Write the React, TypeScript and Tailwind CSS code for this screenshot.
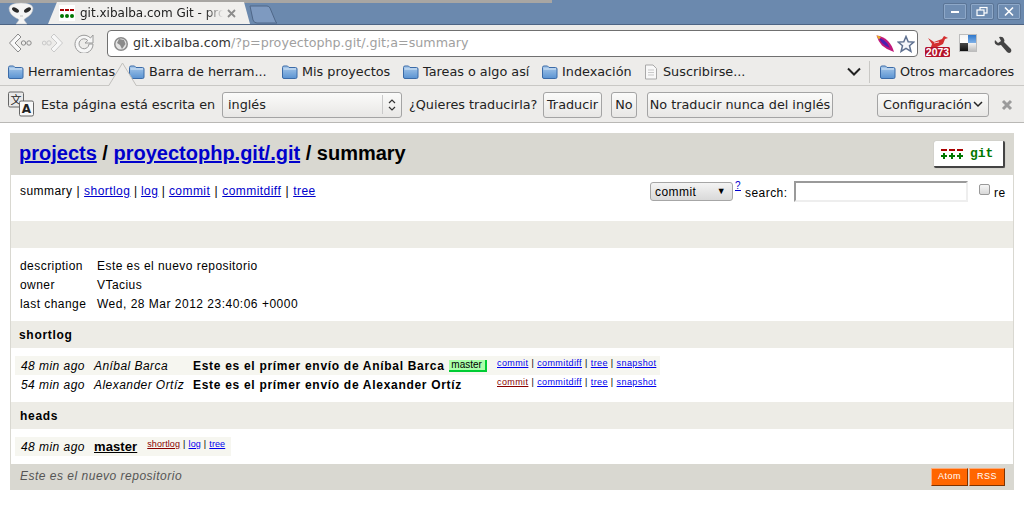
import React from "react";

const UI = "font-['DejaVu_Sans',sans-serif]";
const Folder = () => (
  <svg width="17" height="16" viewBox="0 0 17 16" className="shrink-0">
    <defs>
      <linearGradient id="fg" x1="0" y1="0" x2="0" y2="1">
        <stop offset="0" stopColor="#a8c9ea" />
        <stop offset="1" stopColor="#5a93d2" />
      </linearGradient>
    </defs>
    <path d="M1.500 3.500Q1.500 2 3 2H6.500L8 3.500H14.500Q16 3.500 16 5V13Q16 14.500 14.500 14.500H3Q1.500 14.500 1.500 13Z" fill="url(#fg)" stroke="#3b6ba8" />
    <path d="M2.500 5H15" stroke="#d8e7f6" />
  </svg>
);
const Sep = () => <span className="mx-[3px]">|</span>;
const NavSep = () => <span className="mx-[3.500px]">|</span>;
const NavSepWide = () => <span className="mx-[4.200px]">|</span>;
const L = ({ c, children }: { c?: string; children: React.ReactNode }) => (
  <a href="#" className={`underline ${c ?? "text-[#0000cc]"}`}>{children}</a>
);
const S = ({ c, children }: { c?: string; children: React.ReactNode }) => (
  <a href="#" className={`underline ${c ?? "text-[#0000ee]"}`}>{children}</a>
);
const Btn = ({ children, cls = "" }: { children: React.ReactNode; cls?: string }) => (
  <div className={`flex items-center justify-center rounded-[3px] border border-[#a4a4a4] bg-gradient-to-b from-[#fbfbfa] to-[#e8e7e5] text-[12.8px] text-[#222] ${cls}`}>{children}</div>
);
const Bookmark = ({ label, cls = "" }: { label: string; cls?: string }) => (
  <div className={`flex items-center gap-[4px] ${cls}`}>
    <Folder />
    <span>{label}</span>
  </div>
);
const GitLogo = () => (
  <svg width="69" height="25" viewBox="0 0 69 25" className="block">
    <g fill="#aa0000">
      <rect x="7" y="8" width="6" height="2" />
      <rect x="15" y="8" width="6" height="2" />
      <rect x="23" y="8" width="6" height="2" />
    </g>
    <g fill="#007700">
      <path d="M7 14h2v-2h2v2h2v2h-2v2H9v-2H7z" />
      <path d="M15 14h2v-2h2v2h2v2h-2v2h-2v-2h-2z" />
      <path d="M23 14h2v-2h2v2h2v2h-2v2h-2v-2h-2z" />
    </g>
    <text x="36" y="16" fontFamily="'Liberation Mono', monospace" fontWeight="700" fontSize="13" fill="#007700">git</text>
  </svg>
);

export default function App() {
  return (
    <div className={`w-[1024px] h-[506px] overflow-hidden bg-white flex flex-col ${UI}`}>
      {/* Tab strip */}
      <div className="relative h-[25px] shrink-0 bg-[#6b89ae] border-b border-[#4d6484] flex items-end">
        <div className="absolute left-0 top-0 h-[3px] w-[552px] bg-[#a8a6a3]" />
        <svg width="44" height="25" viewBox="0 0 44 25" className="absolute left-0 top-0">
          <path d="M9 8Q10 3 21 3Q32 3 33 8Q33 14 26 18Q24 19 24 20L27 24H16L19 20Q19 19 16 18Q9 14 9 8Z" fill="#f4f4f4" stroke="#c4c4c4" strokeWidth=".5" />
          <ellipse cx="15.500" cy="10" rx="3.800" ry="2" fill="#2a2a2a" transform="rotate(30 15.500 10)" />
          <ellipse cx="27.500" cy="10" rx="3.800" ry="2" fill="#2a2a2a" transform="rotate(-30 27.500 10)" />
          <path d="M20 16H23" stroke="#aaa" strokeWidth=".7" />
        </svg>
        <div className="relative h-[22px] w-[202px] ml-[48px] flex items-center bg-[#f0efed] [clip-path:polygon(0_100%,9px_0,calc(100%-6px)_0,100%_100%)] pl-[11px]">
          <svg width="16" height="16" viewBox="0 0 16 16" className="shrink-0 bg-white">
            <g fill="#aa0000"><rect x="1" y="4" width="4" height="2" /><rect x="6" y="4" width="4" height="2" /><rect x="11" y="4" width="4" height="2" /></g>
            <g fill="#007700"><circle cx="3" cy="11" r="2" /><circle cx="8" cy="11" r="2" /><circle cx="13" cy="11" r="2" /></g>
          </svg>
          <div className="ml-[5px] w-[143px] overflow-hidden whitespace-nowrap text-[12px] text-[#222] leading-[16px] [mask-image:linear-gradient(to_right,#000_88%,transparent)]">git.xibalba.com Git - pro</div>
          <svg width="9" height="9" viewBox="0 0 9 9" className="ml-[4px] shrink-0"><path d="M1 1L8 8M8 1L1 8" stroke="#8c8c8c" strokeWidth="1.800" /></svg>
        </div>
        <svg width="28" height="19" viewBox="0 0 28 19" className="shrink-0 -ml-[1px]">
          <path d="M1 1H18Q20 1 21 3L26 15Q27 18 28 18H8Q5 18 4 15Z" fill="#7e9ac0" stroke="#4f6788" />
        </svg>
        <div className="ml-auto self-start flex gap-[3px] mr-[3px] mt-[3px]">
          {[
            <path key="a" d="M3 6H11" stroke="#fff" strokeWidth="2" />,
            <g key="b" fill="none" stroke="#fff" strokeWidth="1.200"><rect x="5" y="1.500" width="7" height="5.500" /><rect x="2" y="4" width="7" height="5.500" fill="#6f8db2" /></g>,
            <path key="c" d="M3 1.500L11 9.500M11 1.500L3 9.500" stroke="#fff" strokeWidth="1.600" />,
          ].map((g, i) => (
            <div key={i} className="w-[24px] h-[17px] rounded-[2px] border border-[#5b7596] bg-[#6f8db2] shadow-[inset_0_0_0_1px_#8ea8c8] flex items-center justify-center">
              <svg width="14" height="11" viewBox="0 0 14 11">{g}</svg>
            </div>
          ))}
        </div>
      </div>

      {/* Toolbar */}
      <div className="h-[33px] shrink-0 bg-[#edecea] flex items-start pt-[5px]">
        <div className="w-[107px] h-[25px] shrink-0 flex items-center pl-[8px] gap-[10px]">
          <svg width="24" height="20" viewBox="0 0 24 20"><path d="M10 1L1.500 10L10 19L13 16L7 10L13 4Z" fill="#f9f9f9" stroke="#8a8a8a" /><circle cx="15.500" cy="10" r="2.200" fill="none" stroke="#8a8a8a" /><circle cx="21" cy="10" r="2.200" fill="none" stroke="#8a8a8a" /></svg>
          <svg width="22" height="20" viewBox="0 0 22 20"><path d="M12 1L20.500 10L12 19L9 16L15 10L9 4Z" fill="#f7f7f7" stroke="#c9c9c9" /><circle cx="7" cy="10" r="2.200" fill="none" stroke="#c9c9c9" /><circle cx="2.200" cy="10" r="1.900" fill="none" stroke="#c9c9c9" /></svg>
          <svg width="20" height="20" viewBox="0 0 20 20"><path d="M16.500 5L19 2V10H11L13.800 7.500A5 5 0 1 0 15 11H19A9 9 0 1 1 16.500 5Z" fill="#f6f6f6" stroke="#9a9a9a" /></svg>
        </div>
        <div className="w-[811px] h-[27px] shrink-0 bg-white border border-[#707070] rounded-[4px] flex items-center pl-[5px] pr-[2px]">
          <svg width="16" height="16" viewBox="0 0 16 16" className="shrink-0"><circle cx="8" cy="8" r="7" fill="#8b8b8b" /><circle cx="8" cy="8" r="5.500" fill="#e4e4e4" /><path d="M6 3L11 4L12.500 8L9 13L7 9L4 7Z" fill="#8b8b8b" /></svg>
          <div className="ml-[4px] text-[12.7px] whitespace-nowrap leading-none"><span className="text-[#333]">git.xibalba.com</span><span className="text-[#a0a0a0]">/?p=proyectophp.git/.git;a=summary</span></div>
          <svg width="20" height="20" viewBox="0 0 20 20" className="ml-auto shrink-0 -translate-x-[1px]">
            <path d="M1.500 1.500Q8 2 13 7Q17 11 19 18Q12 16 7 11.500Q3 7 1.500 1.500Z" fill="#c0187a" />
            <path d="M3.500 3.500Q8 5 12 9L15 14Q10 12 7 9Q5 6.500 3.500 3.500Z" fill="#4a1fb0" />
            <path d="M1.500 1.500Q4 1.500 6 3L4 5.500Q2.500 3.500 1.500 1.500Z" fill="#e8b020" />
          </svg>
          <svg width="18" height="18" viewBox="0 0 18 18" className="ml-[1px] shrink-0"><path d="M9 1.500L11.200 6.700L16.800 7.100L12.500 10.800L13.900 16.300L9 13.300L4.100 16.300L5.500 10.800L1.200 7.100L6.800 6.700Z" fill="#f5f7fa" stroke="#5f7190" strokeWidth="1.500" /></svg>
        </div>
        <svg width="28" height="26" viewBox="0 0 28 26" className="ml-[5px] mt-[4px] shrink-0">
          <path d="M5 4L11 8L19 5L21 2L25 4L22 5L20 10L14 13H8L9 10Z" fill="#d32f2f" />
          <path d="M11 9L16 8" stroke="#fff" strokeWidth=".8" />
          <rect x="2" y="13" width="25" height="10" rx="1.500" fill="#b3122a" />
          <text x="14.500" y="22" textAnchor="middle" fontSize="10.500" fontWeight="700" fill="#fff" fontFamily="'Liberation Sans', sans-serif">2073</text>
        </svg>
        <svg width="20" height="20" viewBox="0 0 20 20" className="ml-[7px] mt-[4px] shrink-0">
          <defs>
            <linearGradient id="ckb" x1="0" y1="0" x2="0" y2="1"><stop offset="0" stopColor="#2f78cc" /><stop offset="1" stopColor="#7fb0e6" /></linearGradient>
            <linearGradient id="ckw" x1="0" y1="0" x2="0" y2="1"><stop offset="0" stopColor="#f4f4f4" /><stop offset="1" stopColor="#fff" /></linearGradient>
            <linearGradient id="ckg" x1="0" y1="0" x2="0" y2="1"><stop offset="0" stopColor="#f2f2f2" /><stop offset="1" stopColor="#bdbdbd" /></linearGradient>
            <linearGradient id="ckd" x1="0" y1="0" x2="0" y2="1"><stop offset="0" stopColor="#4a4a4a" /><stop offset="1" stopColor="#111" /></linearGradient>
          </defs>
          <rect x="1" y="0" width="18" height="18" fill="#bdbdbd" />
          <rect x="2" y="1" width="8" height="8" fill="url(#ckw)" /><rect x="10" y="1" width="8" height="8" fill="url(#ckb)" /><rect x="2" y="9" width="8" height="8" fill="url(#ckd)" /><rect x="10" y="9" width="8" height="8" fill="url(#ckg)" />
        </svg>
        <svg width="20" height="20" viewBox="0 0 20 20" className="ml-[15px] mt-[5px] shrink-0">
          <path d="M2 5L5 8L8 6L6 2Q10 1 11 4Q12 6 11 7L18 14Q19 16 17.500 17.500Q16 18.500 14 17L8 10Q5 11 3 9.500Q1 8 2 5Z" fill="#444" />
        </svg>
      </div>

      {/* Bookmarks */}
      <div className="h-[28px] shrink-0 bg-[#edecea] border-b border-[#c9c8c5] flex items-center text-[12.8px] text-[#222] whitespace-nowrap pl-[7px]">
        <Bookmark label="Herramientas" cls="w-[121px]" />
        <Bookmark label="Barra de herram..." cls="w-[153px]" />
        <Bookmark label="Mis proyectos" cls="w-[121px]" />
        <Bookmark label="Tareas o algo así" cls="w-[139px]" />
        <Bookmark label="Indexación" cls="w-[103px]" />
        <div className="flex items-center gap-[5px] w-[203px]">
          <svg width="14" height="16" viewBox="0 0 14 16"><path d="M1.500 1H9L12.500 4.500V15H1.500Z" fill="#f8f8f8" stroke="#a9a9a9" /><path d="M4 6H10M4 8.500H10M4 11H10" stroke="#c9c9c9" /></svg>
          <span>Suscribirse...</span>
        </div>
        <svg width="14" height="9" viewBox="0 0 14 9" className="shrink-0"><path d="M1 1.500L7 7.500L13 1.500" fill="none" stroke="#222" strokeWidth="2" /></svg>
        <div className="h-[22px] w-px bg-[#c9c8c5] ml-[8px] mr-[9px]" />
        <Bookmark label="Otros marcadores" />
      </div>

      {/* Translate bar */}
      <div className="relative h-[37px] shrink-0 bg-[#edecea] border-b border-[#b9b8b5] flex items-center pt-[1px] text-[12.8px] text-[#222] whitespace-nowrap">
        <svg width="29" height="25" viewBox="0 0 29 25" className="absolute left-[108px] -top-[24px]">
          <path d="M0.500 24L14.500 1L28.500 24" fill="#edecea" stroke="#c0bfbc" />
          <rect x="1.500" y="23.500" width="26" height="2" fill="#edecea" />
        </svg>
        <svg width="27" height="27" viewBox="0 0 27 27" className="ml-[8px] shrink-0">
          <rect x="0.500" y="1" width="15" height="15" rx="1.500" fill="#e9e9e9" stroke="#666" />
          <text x="8" y="13" textAnchor="middle" fontSize="11" fill="#222" fontFamily="'Noto Sans CJK SC', sans-serif">文</text>
          <rect x="11.500" y="10" width="14" height="15" rx="1.500" fill="#f8f8f8" stroke="#666" />
          <text x="18.500" y="22" textAnchor="middle" fontSize="12" fontWeight="700" fill="#222" fontFamily="'DejaVu Sans', sans-serif">A</text>
        </svg>
        <span className="ml-[6px] w-[181px] shrink-0">Esta página está escrita en</span>
        <div className="w-[180px] h-[26px] shrink-0 rounded-[3px] border border-[#a4a4a4] bg-gradient-to-b from-[#fbfbfa] to-[#e8e7e5] flex items-center pl-[5px]">
          <span>inglés</span>
          <div className="ml-auto h-[19px] border-l border-[#c9c9c9] w-[19px] flex items-center justify-center">
            <svg width="8" height="14" viewBox="0 0 8 14"><path d="M1 5L4 2L7 5M1 9L4 12L7 9" fill="none" stroke="#333" strokeWidth="1.200" /></svg>
          </div>
        </div>
        <span className="ml-[7px] w-[134px] shrink-0">¿Quieres traducirla?</span>
        <Btn cls="w-[59px] h-[26px]">Traducir</Btn>
        <Btn cls="w-[26px] h-[26px] ml-[9px]">No</Btn>
        <Btn cls="w-[186px] h-[26px] ml-[10px]">No traducir nunca del inglés</Btn>
        <Btn cls="w-[112px] h-[24px] ml-[44px]">
          Configuración
          <svg width="10" height="7" viewBox="0 0 10 7" className="ml-[1px]"><path d="M1 1L5 5L9 1" fill="none" stroke="#222" strokeWidth="1.500" /></svg>
        </Btn>
        <svg width="12" height="12" viewBox="0 0 12 12" className="ml-[12px] shrink-0"><path d="M2 2L10 10M10 2L2 10" stroke="#9b9b9b" strokeWidth="3" /></svg>
      </div>

      {/* Page */}
      <div className="flex-1 bg-white px-[10px] pt-[10px] font-['Liberation_Sans',sans-serif] text-[12px] text-black">
        <div className="border-x border-[#d9d8d1] h-[357px] flex flex-col tracking-[0.45px]">
          <div className="h-[42px] shrink-0 -mx-px bg-[#d9d8d1] flex items-center pl-[9px] pr-[9px] pb-[2px] text-[20px] font-bold tracking-normal">
            <L>projects</L><span>&nbsp;/&nbsp;</span><L>proyectophp.git/.git</L><span>&nbsp;/ summary</span>
            <a className="ml-auto mt-[3px] block bg-white rounded-[2px] border-r-2 border-b-2 border-[#444] shadow-[0_0_1px_#999]"><GitLogo /></a>
          </div>
          <div className="h-[46px] shrink-0 flex pl-[9px] pr-[8px] pt-[9px]">
            <div className="leading-[14px] whitespace-nowrap">
              summary<span className="mx-[4px]">|</span><L>shortlog</L><NavSep /><L>log</L><NavSep /><L>commit</L><NavSepWide /><L>commitdiff</L><NavSepWide /><L>tree</L>
            </div>
            <div className="ml-auto flex items-start whitespace-nowrap">
              <div className="w-[83px] h-[19px] mt-[-2px] rounded-[3px] border border-[#a6a6a6] bg-gradient-to-b from-[#f4f4f4] to-[#d9d9d9] flex items-center pl-[4px] pr-[6px]">
                commit<span className="ml-auto text-[9px]">▼</span>
              </div>
              <a href="#" className="ml-[2px] -mt-[6px] text-[10px] underline text-[#0000cc]">?</a>
              <span className="ml-[4px] w-[49px]">search:</span>
              <div className="w-[174px] h-[21px] -mt-[3px] border-2 border-t-[#9a9a9a] border-l-[#9a9a9a] border-r-[#eeeeee] border-b-[#eeeeee] bg-white" />
              <div className="ml-[11px] w-[11px] h-[11px] rounded-[2px] border border-[#999] bg-gradient-to-b from-[#f6f6f6] to-[#d8d8d8]" />
              <span className="ml-[4px] w-[11px]">re</span>
            </div>
          </div>
          <div className="h-[27px] shrink-0 bg-[#edece6]" />
          <div className="h-[73px] shrink-0 pl-[9px] pt-[8px] grid grid-cols-[77px_1fr] auto-rows-[19px] items-center">
            <div>description</div><div>Este es el nuevo repositorio</div>
            <div>owner</div><div>VTacius</div>
            <div>last change</div><div className="tracking-[0.5px]">Wed, 28 Mar 2012 23:40:06 +0000</div>
          </div>
          <div className="h-[27px] shrink-0 bg-[#edece6] flex items-center pl-[8px] font-bold tracking-[0.7px]">shortlog</div>
          <div className="h-[54px] shrink-0 pl-[4px] pt-[8px]">
            <div className="w-[645px] h-[19px] bg-[#f6f6f0] flex items-center">
              <i className="w-[79px] pl-[6px] shrink-0">48 min ago</i>
              <i className="w-[99px] shrink-0 whitespace-nowrap">Aníbal Barca</i>
              <div className="w-[304px] shrink-0 flex items-center">
                <b className="tracking-[0.7px] whitespace-nowrap">Este es el prímer envío de Aníbal Barca</b>
                <span className="ml-[4px] mt-[1px] w-[38px] h-[12px] bg-[#aaffaa] border-r-2 border-b-2 border-[#00cc33] flex items-center justify-center text-[10px] leading-none tracking-normal">master</span>
              </div>
              <span className="-mt-[4px] text-[9px] whitespace-nowrap tracking-[0.4px]"><S>commit</S><Sep /><S>commitdiff</S><Sep /><S>tree</S><Sep /><S>snapshot</S></span>
            </div>
            <div className="w-[645px] h-[19px] flex items-center">
              <i className="w-[79px] pl-[6px] shrink-0">54 min ago</i>
              <i className="w-[99px] shrink-0 whitespace-nowrap">Alexander Ortíz</i>
              <b className="w-[304px] shrink-0 tracking-[0.7px] whitespace-nowrap">Este es el prímer envío de Alexander Ortíz</b>
              <span className="-mt-[4px] text-[9px] whitespace-nowrap tracking-[0.4px]"><S c="text-[#880000]">commit</S><Sep /><S>commitdiff</S><Sep /><S>tree</S><Sep /><S>snapshot</S></span>
            </div>
          </div>
          <div className="h-[27px] shrink-0 bg-[#edece6] flex items-center pl-[9px] font-bold tracking-[0.7px]">heads</div>
          <div className="h-[35px] shrink-0 pl-[4px] pt-[8px]">
            <div className="w-[216px] h-[19px] bg-[#f6f6f0] flex items-center">
              <i className="w-[79px] pl-[6px] shrink-0">48 min ago</i>
              <b className="underline text-[13px] tracking-[0.1px]">master</b>
              <span className="ml-[10px] -mt-[4px] text-[9px] whitespace-nowrap tracking-[0.1px]"><S c="text-[#880000]">shortlog</S><Sep /><S>log</S><Sep /><S>tree</S></span>
            </div>
          </div>
          <div className="h-[26px] shrink-0 -mx-px bg-[#d9d8d1] flex items-center pl-[10px] pr-[9px] text-[#555]">
            <i className="-mt-[2px] tracking-[0.5px]">Este es el nuevo repositorio</i>
            <div className="ml-auto flex text-white text-[9px] tracking-[0.5px] gap-px">
              <span className="w-[37px] h-[18px] bg-[#ff6600] border border-[#ffaa77] border-r-[#7d3302] border-b-[#7d3302] flex items-center justify-center">Atom</span>
              <span className="w-[36px] h-[18px] bg-[#ff6600] border border-[#ffaa77] border-r-[#7d3302] border-b-[#7d3302] flex items-center justify-center">RSS</span>
            </div>
          </div>
        </div>
      </div>
    </div>
  );
}
